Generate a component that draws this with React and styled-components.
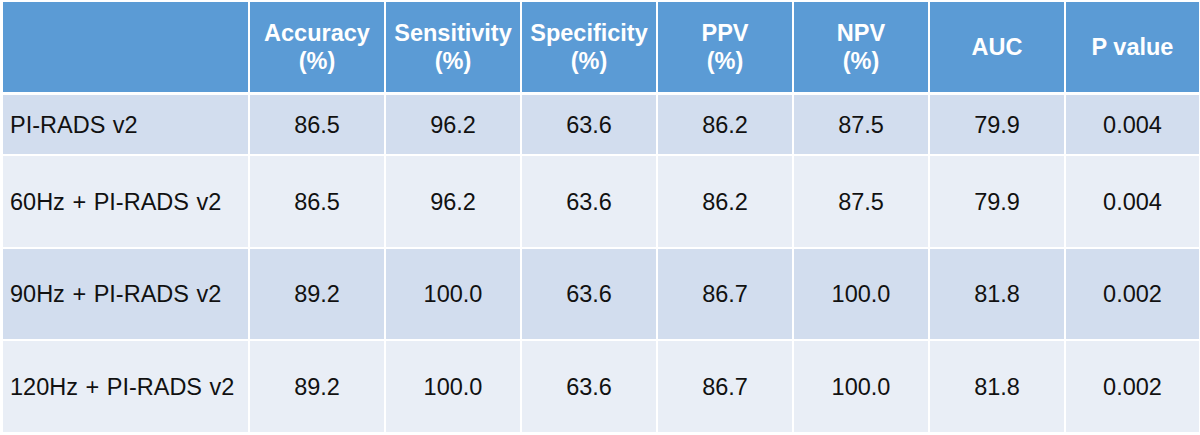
import React from "react";
import styled, { createGlobalStyle } from "styled-components";

const GlobalStyle = createGlobalStyle`
  html, body {
    margin: 0;
    padding: 0;
    background: #ffffff;
  }
  body {
    font-family: "Liberation Sans", Arial, sans-serif;
  }
`;

const Page = styled.div`
  padding: 2px 1px 0 3px;
  width: 1200px;
  height: 435px;
  box-sizing: border-box;
  background: #ffffff;
`;

const Table = styled.div`
  display: flex;
  flex-direction: column;
  gap: 2px;
`;

const Row = styled.div`
  display: grid;
  grid-template-columns: 245px repeat(6, 134px) 133px;
  column-gap: 2px;
  height: ${(p) => p.$h}px;
  margin-bottom: ${(p) => (p.$header ? 1 : 0)}px;
`;

const HeadCell = styled.div`
  background: #5b9bd5;
  color: #ffffff;
  font-weight: bold;
  font-size: 23.5px;
  line-height: 28px;
  display: flex;
  align-items: center;
  justify-content: center;
  text-align: center;
  white-space: pre-line;
`;

const Cell = styled.div`
  background: ${(p) => (p.$alt ? "#e9eef6" : "#d2ddee")};
  color: #111111;
  font-size: 23.5px;
  line-height: 28px;
  word-spacing: 1px;
  display: flex;
  align-items: center;
  justify-content: ${(p) => (p.$label ? "flex-start" : "center")};
  padding-left: ${(p) => (p.$label ? 7 : 0)}px;
  white-space: nowrap;
`;

const headers = [
  "",
  "Accuracy\n(%)",
  "Sensitivity\n(%)",
  "Specificity\n(%)",
  "PPV\n(%)",
  "NPV\n(%)",
  "AUC",
  "P value",
];

const rows = [
  { h: 59, cells: ["PI-RADS v2", "86.5", "96.2", "63.6", "86.2", "87.5", "79.9", "0.004"] },
  { h: 91, cells: ["60Hz + PI-RADS v2", "86.5", "96.2", "63.6", "86.2", "87.5", "79.9", "0.004"] },
  { h: 90, cells: ["90Hz + PI-RADS v2", "89.2", "100.0", "63.6", "86.7", "100.0", "81.8", "0.002"] },
  { h: 91, cells: ["120Hz + PI-RADS v2", "89.2", "100.0", "63.6", "86.7", "100.0", "81.8", "0.002"] },
];

export default function App() {
  return (
    <>
      <GlobalStyle />
      <Page>
        <Table>
          <Row $h={90} $header>
            {headers.map((t, i) => (
              <HeadCell key={i}>{t}</HeadCell>
            ))}
          </Row>
          {rows.map((r, ri) => (
            <Row key={ri} $h={r.h}>
              {r.cells.map((c, ci) => (
                <Cell key={ci} $alt={ri % 2 === 1} $label={ci === 0}>
                  {c}
                </Cell>
              ))}
            </Row>
          ))}
        </Table>
      </Page>
    </>
  );
}
